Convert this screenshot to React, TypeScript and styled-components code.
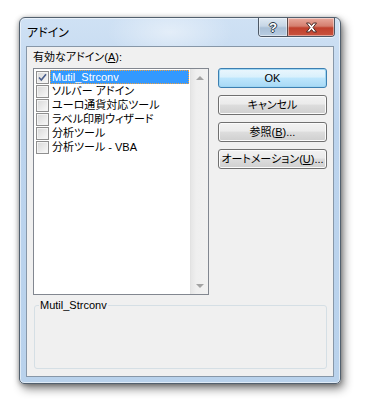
import React from "react";
import styled, { createGlobalStyle } from "styled-components";

const GlobalStyle = createGlobalStyle`
  html, body {
    margin: 0;
    padding: 0;
    background: #ffffff;
  }
  body {
    font-family: "Liberation Sans", "Noto Sans CJK JP", sans-serif;
    font-feature-settings: "palt";
    color: #000;
  }
`;

const Desktop = styled.div`
  width: 366px;
  height: 408px;
  padding: 17px 0 0 19px;
  box-sizing: border-box;
`;

const Window = styled.div`
  width: 322px;
  height: 367px;
  box-sizing: border-box;
  display: flex;
  flex-direction: column;
  border: 1px solid #52606e;
  border-radius: 6px 6px 5px 5px;
  background:
    radial-gradient(ellipse 90px 40px at 150px 14px, rgba(255, 255, 255, 0.45), rgba(255, 255, 255, 0) 70%),
    linear-gradient(180deg, #cfe1f4 0%, #bcd4ee 30%, #b9d2ec 100%);
  box-shadow:
    inset 0 0 0 1px rgba(255, 255, 255, 0.55),
    3px 5px 10px rgba(0, 0, 0, 0.45),
    0 1px 5px rgba(0, 0, 0, 0.35);
`;

const TitleBar = styled.div`
  height: 28px;
  display: flex;
  align-items: flex-start;
  padding-left: 7px;
  padding-right: 5px;
`;

const Title = styled.div`
  flex: 1;
  margin-top: 8px;
  font-size: 12px;
  line-height: 14px;
  color: #000;
`;

const CaptionGroup = styled.div`
  display: flex;
  height: 18px;
  border: 1px solid #4d5866;
  border-top: none;
  border-radius: 0 0 4px 4px;
  overflow: hidden;
  box-shadow: 0 1px 0 rgba(255, 255, 255, 0.6);
`;

const CaptionButton = styled.div<{ $close?: boolean }>`
  width: ${(p) => (p.$close ? 47 : 28)}px;
  height: 18px;
  display: flex;
  align-items: center;
  justify-content: center;
  box-sizing: border-box;
  border-left: ${(p) => (p.$close ? "1px solid #5a4a4a" : "none")};
  background: ${(p) =>
    p.$close
      ? "linear-gradient(180deg, #e9a99c 0%, #d47f6f 45%, #c0402c 55%, #c9533f 100%)"
      : "linear-gradient(180deg, #dfe9f3 0%, #c6d6e6 45%, #a9bfd6 55%, #b9cde2 100%)"};
  box-shadow: inset 0 0 0 1px rgba(255, 255, 255, 0.45);
`;

const HelpGlyph = styled.span`
  font-family: "Liberation Sans", sans-serif;
  font-weight: bold;
  font-size: 13px;
  line-height: 13px;
  color: #ffffff;
  text-shadow:
    1px 0 0 #2b3947,
    -1px 0 0 #2b3947,
    0 1px 0 #2b3947,
    0 -1px 0 #2b3947;
`;

const Client = styled.div`
  flex: 1;
  margin: 0 6px 6px 6px;
  border: 1px solid #8797a8;
  background: #f0f0f0;
  padding: 3px 0 0 6px;
  display: flex;
  flex-direction: column;
`;

const TopRow = styled.div`
  display: flex;
  align-items: flex-start;
`;

const LeftColumn = styled.div`
  display: flex;
  flex-direction: column;
`;

const FieldLabel = styled.div`
  font-size: 11px;
  line-height: 14px;
  height: 14px;
  margin-bottom: 4px;
  white-space: nowrap;
`;

const Underline = styled.span`
  text-decoration: underline;
`;

const ListBox = styled.div`
  width: 176px;
  height: 227px;
  box-sizing: border-box;
  border: 1px solid #828790;
  background: #ffffff;
  display: flex;
`;

const Items = styled.div`
  flex: 1;
  padding-top: 1px;
  display: flex;
  flex-direction: column;
`;

const Row = styled.div`
  height: 14px;
  display: flex;
  align-items: center;
  overflow: hidden;
`;

const CheckBox = styled.div`
  width: 13px;
  height: 13px;
  margin-left: 2px;
  flex-shrink: 0;
  box-sizing: border-box;
  border: 1px solid #8f8f8f;
  background: linear-gradient(135deg, #d9d9d9 0%, #ececec 60%, #fafafa 100%);
  box-shadow: inset 0 0 0 1px #f4f4f4;
  display: flex;
  align-items: center;
  justify-content: center;
`;

const ItemText = styled.div<{ $selected?: boolean }>`
  flex: 1;
  height: 14px;
  margin-left: 1px;
  margin-right: 1px;
  padding-left: 2px;
  box-sizing: border-box;
  font-size: 11px;
  line-height: 14px;
  white-space: nowrap;
  overflow: hidden;
  color: ${(p) => (p.$selected ? "#ffffff" : "#000000")};
  background: ${(p) => (p.$selected ? "#3399ff" : "transparent")};
  outline: ${(p) => (p.$selected ? "1px dotted #f0a040" : "none")};
  outline-offset: -1px;
`;

const ScrollBar = styled.div`
  width: 17px;
  display: flex;
  flex-direction: column;
  justify-content: space-between;
  background: linear-gradient(90deg, #e6e6e6 0%, #efefef 30%, #f1f1f1 100%);
  border-left: 1px solid #e2e2e2;
`;

const ArrowButton = styled.div`
  height: 17px;
  display: flex;
  align-items: center;
  justify-content: center;
`;

const Arrow = styled.div<{ $down?: boolean }>`
  width: 0;
  height: 0;
  border-left: 4px solid transparent;
  border-right: 4px solid transparent;
  ${(p) =>
    p.$down
      ? "border-top: 4px solid #a3a3a3;"
      : "border-bottom: 4px solid #a3a3a3;"}
`;

const ButtonColumn = styled.div`
  width: 109px;
  margin-left: 9px;
  margin-top: 18px;
  display: flex;
  flex-direction: column;
  gap: 7px;
`;

const PushButton = styled.div<{ $default?: boolean }>`
  height: 20px;
  box-sizing: border-box;
  border: 1px solid ${(p) => (p.$default ? "#3c7fb1" : "#707070")};
  border-radius: 3px;
  background: ${(p) =>
    p.$default
      ? "linear-gradient(180deg, #eaf6fd 0%, #d9f0fc 45%, #bee6fd 50%, #a7d9f5 100%)"
      : "linear-gradient(180deg, #f2f2f2 0%, #ebebeb 45%, #dddddd 50%, #cfcfcf 100%)"};
  box-shadow: inset 0 0 0 1px ${(p) => (p.$default ? "#9fd6f3" : "#fbfbfb")};
  display: flex;
  align-items: center;
  justify-content: center;
  font-size: 11px;
  line-height: 14px;
  white-space: nowrap;
`;

const GroupBox = styled.fieldset`
  width: 293px;
  height: 71px;
  box-sizing: border-box;
  margin: 3px 0 0 1px;
  padding: 0;
  border: 1px solid #d5dfe5;
  border-radius: 3px;
`;

const GroupLegend = styled.legend`
  margin-left: 4px;
  padding: 0 1px;
  font-size: 11px;
  line-height: 14px;
`;

const addins = [
  { name: "Mutil_Strconv", checked: true },
  { name: "ソルバー アドイン", checked: false },
  { name: "ユーロ通貨対応ツール", checked: false },
  { name: "ラベル印刷ウィザード", checked: false },
  { name: "分析ツール", checked: false },
  { name: "分析ツール - VBA", checked: false },
];

function CloseIcon() {
  return (
    <svg width="13" height="11" viewBox="0 0 13 11">
      <path
        d="M1.5 1 L4.5 1 L6.5 3.5 L8.5 1 L11.5 1 L8 5.5 L11.5 10 L8.5 10 L6.5 7.5 L4.5 10 L1.5 10 L5 5.5 Z"
        fill="#ffffff"
        stroke="#4a2a26"
        strokeWidth="1"
        strokeLinejoin="round"
      />
    </svg>
  );
}

function CheckMark() {
  return (
    <svg width="9" height="9" viewBox="0 0 9 9">
      <path
        d="M1 4.5 L3.3 7 L8 1.2"
        fill="none"
        stroke="#4b5f8c"
        strokeWidth="1.6"
      />
    </svg>
  );
}

export default function App() {
  const [selected, setSelected] = React.useState(0);

  return (
    <Desktop>
      <GlobalStyle />
      <Window>
        <TitleBar>
          <Title>アドイン</Title>
          <CaptionGroup>
            <CaptionButton>
              <HelpGlyph>?</HelpGlyph>
            </CaptionButton>
            <CaptionButton $close>
              <CloseIcon />
            </CaptionButton>
          </CaptionGroup>
        </TitleBar>
        <Client>
          <TopRow>
            <LeftColumn>
              <FieldLabel>
                有効なアドイン(<Underline>A</Underline>):
              </FieldLabel>
              <ListBox>
                <Items>
                  {addins.map((a, i) => (
                    <Row key={a.name} onClick={() => setSelected(i)}>
                      <CheckBox>{a.checked && <CheckMark />}</CheckBox>
                      <ItemText $selected={i === selected}>{a.name}</ItemText>
                    </Row>
                  ))}
                </Items>
                <ScrollBar>
                  <ArrowButton>
                    <Arrow />
                  </ArrowButton>
                  <ArrowButton>
                    <Arrow $down />
                  </ArrowButton>
                </ScrollBar>
              </ListBox>
            </LeftColumn>
            <ButtonColumn>
              <PushButton $default>OK</PushButton>
              <PushButton>キャンセル</PushButton>
              <PushButton>
                参照(<Underline>B</Underline>)...
              </PushButton>
              <PushButton>
                オートメーション(<Underline>U</Underline>)...
              </PushButton>
            </ButtonColumn>
          </TopRow>
          <GroupBox>
            <GroupLegend>{addins[selected].name}</GroupLegend>
          </GroupBox>
        </Client>
      </Window>
    </Desktop>
  );
}
